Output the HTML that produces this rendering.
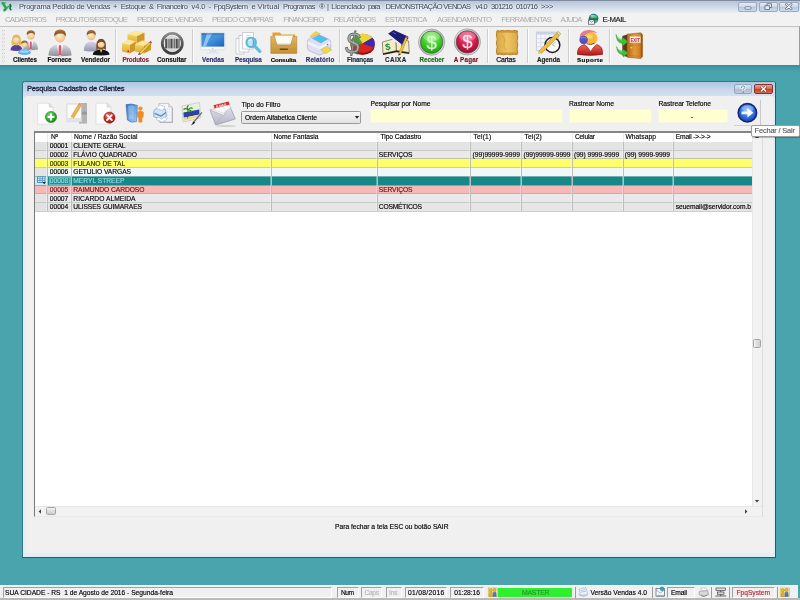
<!DOCTYPE html>
<html lang="pt-BR">
<head>
<meta charset="utf-8">
<title>Programa Pedido de Vendas + Estoque &amp; Financeiro v4.0</title>
<style>
*{box-sizing:border-box;margin:0;padding:0}
html,body{width:800px;height:600px;overflow:hidden}
body{position:relative;background:#4aa4ae;font-family:"Liberation Sans","DejaVu Sans",sans-serif;color:#222}
div,span,svg{position:absolute}
.t{white-space:pre;line-height:1;-webkit-text-stroke:.15px currentColor}
#titlebar{left:0;top:0;width:800px;height:13px;background:linear-gradient(#7d8ca0 0,#7d8ca0 .7px,#b9c6d8 1.4px,#cbd6e4 6px,#dde5ef 10px,#ebeff5 12.5px)}
#menubar{left:0;top:13px;width:800px;height:13px;background:#f2f2f2}
#toolbar{left:0;top:26px;width:800px;height:39px;background:#f0f0f0;border-top:1px solid #c2c2c2;border-right:1px solid #9a9a9a}
#shadow{left:0;top:65px;width:800px;height:7px;background:linear-gradient(#368e9a,#429ba6 45%,#4aa4ae)}
.sep{top:29px;width:2px;height:34px;border-left:1px solid #cdcdcd;border-right:1px solid #fdfdfd}
.wb{top:1.5px;height:10px;border:1px solid #9aaac0;border-radius:2px;background:linear-gradient(#e6edf6,#c9d6e6 50%,#b8c8dc 51%,#cddaea)}
#dlg{left:22px;top:80.5px;width:754px;height:477px;background:#e1eef6;border:1px solid #2f7883;border-bottom-color:#1f5f6a;border-right-color:#1f5f6a;border-radius:3px 3px 0 0}
#dlgtitle{left:0;top:0;width:752px;height:15px;background:linear-gradient(#aec5e3,#c6d6ea 45%,#d6e2f1);border-radius:3px 3px 0 0}
#dlgbody{left:2.5px;top:14.5px;width:747px;height:457px;background:#f0f0f0}
.inp{background:#ffffd2;border:1px solid #f6f6e2;top:109.3px;height:13.7px}
#grid{left:33.5px;top:130.5px;width:729px;height:386.5px;background:#fff;border:1px solid #e9e9e9;border-top:2px solid #858585;border-left:1px solid #7a7a7a;border-right-color:#dcdcdc}
.row{left:34.5px;width:717px;height:8.8px}
.vl{top:132.5px;width:1px;height:78.5px;background:#b4b4b4}
.st{top:587px;height:10.5px;border:1px solid;border-color:#a0a0a0 #fff #fff #a0a0a0;background:#f0f0f0}
.ss{top:586.5px;width:1px;height:11px;background:#9c9c9c}
</style>
</head>
<body>
<div id="titlebar"></div>
<div id="menubar"></div>
<div id="toolbar"></div>
<div id="shadow"></div>
<!-- window buttons -->
<div class="wb" style="left:738px;width:19px"></div>
<div class="wb" style="left:758.5px;width:19px"></div>
<div class="wb" style="left:779px;width:19.5px"></div>
<svg style="left:738px;top:1px" width="62" height="12" viewBox="0 0 62 12">
<rect x="7" y="5.8" width="6" height="2.4" rx=".8" fill="#fff" stroke="#56627a" stroke-width=".8"/>
<rect x="29" y="2.8" width="4.4" height="3.6" fill="#eef2f8" stroke="#56627a" stroke-width=".8"/>
<rect x="27" y="4.8" width="4.4" height="3.6" fill="#eef2f8" stroke="#56627a" stroke-width=".8"/>
<path d="M48.4 3.4 L53.2 7.8 M53.2 3.4 L48.4 7.8" stroke="#56627a" stroke-width="2.4" stroke-linecap="round"/>
<path d="M48.4 3.4 L53.2 7.8 M53.2 3.4 L48.4 7.8" stroke="#fff" stroke-width="1.1" stroke-linecap="round"/>
</svg>
<!-- toolbar separators -->
<div class="sep" style="left:115px"></div>
<div class="sep" style="left:192px"></div>
<div class="sep" style="left:338.5px"></div>
<div class="sep" style="left:486.5px"></div>
<div class="sep" style="left:527px"></div>
<div class="sep" style="left:567.5px"></div>
<div class="sep" style="left:608.5px"></div>
<!-- dialog -->
<div id="dlg"><div id="dlgtitle"></div><div id="dlgbody"></div></div>
<div style="left:733.5px;top:83.5px;width:18.5px;height:10px;border:1px solid #93a6c0;border-radius:2px;background:linear-gradient(#d6e1ef,#c0d0e4 50%,#aabdd6 51%,#bccce0)"></div>
<div style="left:753.5px;top:83.5px;width:19.5px;height:10px;border:1px solid #84362c;border-radius:2px;background:linear-gradient(#e8a698,#d6624e 50%,#c43c26 51%,#d66a50)"></div>
<svg style="left:733px;top:83px" width="42" height="12" viewBox="0 0 42 12">
<path d="M8.3 4.6 Q8.3 2.8 10 2.8 Q11.8 2.8 11.8 4.4 Q11.8 5.6 10.2 6.2 L10.2 7.2" fill="none" stroke="#fff" stroke-width="2.2" stroke-linecap="round"/>
<path d="M8.3 4.6 Q8.3 2.8 10 2.8 Q11.8 2.8 11.8 4.4 Q11.8 5.6 10.2 6.2 L10.2 7.2" fill="none" stroke="#6a7a92" stroke-width=".9" stroke-linecap="round"/>
<circle cx="10.2" cy="9" r=".75" fill="#6a7a92"/>
<path d="M28.4 3.8 L32.6 8 M32.6 3.8 L28.4 8" stroke="#8a4238" stroke-width="2.5" stroke-linecap="round"/>
<path d="M28.4 3.8 L32.6 8 M32.6 3.8 L28.4 8" stroke="#fff" stroke-width="1.3" stroke-linecap="round"/>
</svg>
<!-- filter controls -->
<div style="left:241px;top:111px;width:120px;height:12.5px;border:1px solid #9a9a9a;border-radius:1.5px;background:linear-gradient(#f4f4f4,#e2e2e2)"></div>
<svg style="left:353.6px;top:115px" width="6" height="5" viewBox="0 0 6 5"><path d="M.8 1 L5.2 1 L3 3.8Z" fill="#222"/></svg>
<div class="inp" style="left:370px;width:193px"></div>
<div class="inp" style="left:569px;width:83px"></div>
<div class="inp" style="left:658px;width:70px"></div>
<div style="left:691px;top:116.5px;width:2.2px;height:1.6px;background:#e0302a"></div>
<div style="left:733.5px;top:100px;width:27px;height:26px;border-right:1px solid #c8c8c8;border-bottom:1px solid #d0d0d0"></div>
<div id="grid"></div>
<div class="row" style="top:141.50px;height:9.03px;background:#e4e4e4"></div>
<div style="left:34.5px;top:141.50px;width:13px;height:9.03px;background:#e2e2e2"></div>
<div class="row" style="top:150.23px;height:9.03px;background:#e9e9e9"></div>
<div style="left:34.5px;top:150.23px;width:13px;height:9.03px;background:#e6e6e6"></div>
<div class="row" style="top:158.96px;height:9.03px;background:#ffff6a"></div>
<div style="left:34.5px;top:158.96px;width:13px;height:9.03px;background:#ffff6a"></div>
<div class="row" style="top:167.69px;height:9.03px;background:#f1f7f7"></div>
<div style="left:34.5px;top:167.69px;width:13px;height:9.03px;background:#e4e4e4"></div>
<div class="row" style="top:176.42px;height:9.03px;background:#168888"></div>
<div style="left:34.5px;top:176.42px;width:13px;height:9.03px;background:#c4ecf0"></div>
<div class="row" style="top:185.15px;height:9.03px;background:#f7b8b8"></div>
<div style="left:34.5px;top:185.15px;width:13px;height:9.03px;background:#f7b8b8"></div>
<div class="row" style="top:193.88px;height:9.03px;background:#e9e9e9"></div>
<div style="left:34.5px;top:193.88px;width:13px;height:9.03px;background:#e4e4e4"></div>
<div class="row" style="top:202.61px;height:9.03px;background:#e6e6e6"></div>
<div style="left:34.5px;top:202.61px;width:13px;height:9.03px;background:#e2e2e2"></div>
<div style="left:34.5px;top:149.73px;width:717px;height:1px;background:#c2c2c2;opacity:.8"></div>
<div style="left:34.5px;top:158.46px;width:717px;height:1px;background:#b9b98a;opacity:.8"></div>
<div style="left:34.5px;top:167.19px;width:717px;height:1px;background:#c9c97a;opacity:.8"></div>
<div style="left:34.5px;top:175.92px;width:717px;height:1px;background:#8ab8b8;opacity:.8"></div>
<div style="left:34.5px;top:184.65px;width:717px;height:1px;background:#a08a8a;opacity:.8"></div>
<div style="left:34.5px;top:193.38px;width:717px;height:1px;background:#c9a0a0;opacity:.8"></div>
<div style="left:34.5px;top:202.11px;width:717px;height:1px;background:#c2c2c2;opacity:.8"></div>
<div style="left:34.5px;top:210.84px;width:717px;height:1px;background:#c8c8c8;opacity:.8"></div>
<div class="vl" style="left:46.3px;top:141.5px;height:69.8px;background:rgba(255,255,255,.3)"></div>
<div class="vl" style="left:47.3px;top:141.5px;height:69.8px;background:#bdbdbd"></div>
<div class="vl" style="left:47.3px;top:133px;height:8.5px;background:#ececec"></div>
<div class="vl" style="left:69.6px;top:141.5px;height:69.8px;background:rgba(255,255,255,.3)"></div>
<div class="vl" style="left:70.6px;top:141.5px;height:69.8px;background:#bdbdbd"></div>
<div class="vl" style="left:70.6px;top:133px;height:8.5px;background:#ececec"></div>
<div class="vl" style="left:269.8px;top:141.5px;height:69.8px;background:rgba(255,255,255,.3)"></div>
<div class="vl" style="left:270.8px;top:141.5px;height:69.8px;background:#bdbdbd"></div>
<div class="vl" style="left:270.8px;top:133px;height:8.5px;background:#ececec"></div>
<div class="vl" style="left:376.1px;top:141.5px;height:69.8px;background:rgba(255,255,255,.3)"></div>
<div class="vl" style="left:377.1px;top:141.5px;height:69.8px;background:#bdbdbd"></div>
<div class="vl" style="left:377.1px;top:133px;height:8.5px;background:#ececec"></div>
<div class="vl" style="left:469.2px;top:141.5px;height:69.8px;background:rgba(255,255,255,.3)"></div>
<div class="vl" style="left:470.2px;top:141.5px;height:69.8px;background:#bdbdbd"></div>
<div class="vl" style="left:470.2px;top:133px;height:8.5px;background:#ececec"></div>
<div class="vl" style="left:520.4px;top:141.5px;height:69.8px;background:rgba(255,255,255,.3)"></div>
<div class="vl" style="left:521.4px;top:141.5px;height:69.8px;background:#bdbdbd"></div>
<div class="vl" style="left:521.4px;top:133px;height:8.5px;background:#ececec"></div>
<div class="vl" style="left:571.2px;top:141.5px;height:69.8px;background:rgba(255,255,255,.3)"></div>
<div class="vl" style="left:572.2px;top:141.5px;height:69.8px;background:#bdbdbd"></div>
<div class="vl" style="left:572.2px;top:133px;height:8.5px;background:#ececec"></div>
<div class="vl" style="left:621.8px;top:141.5px;height:69.8px;background:rgba(255,255,255,.3)"></div>
<div class="vl" style="left:622.8px;top:141.5px;height:69.8px;background:#bdbdbd"></div>
<div class="vl" style="left:622.8px;top:133px;height:8.5px;background:#ececec"></div>
<div class="vl" style="left:672.4px;top:141.5px;height:69.8px;background:rgba(255,255,255,.3)"></div>
<div class="vl" style="left:673.4px;top:141.5px;height:69.8px;background:#bdbdbd"></div>
<div class="vl" style="left:673.4px;top:133px;height:8.5px;background:#ececec"></div>
<div style="left:48.5px;top:176.72px;width:21.6px;height:7.93px;background:#1f9292;border:1px solid #58b8b8"></div>
<svg style="left:35.5px;top:176.42px" width="12" height="9" viewBox="0 0 12 9"><rect x="1.4" y=".8" width="7.6" height="5.6" fill="#fff" stroke="#2f7fb4" stroke-width=".8"/><path d="M1.4 2.8H9M4 .8V6.4M6.4 .8V6.4M1.4 4.6H9" stroke="#2f7fb4" stroke-width=".7"/><path d="M6.6 6 L9.8 6 L8.2 8.2Z" fill="#111"/></svg>
<div style="left:751.5px;top:132.5px;width:10px;height:373px;background:#f2f2f2;border-left:1px solid #e6e6e6"></div>
<div style="left:752.5px;top:338.5px;width:8.5px;height:9px;background:linear-gradient(90deg,#f4f4f4,#dcdcdc 50%,#cfcfcf);border:1px solid #a4a4a4;border-radius:1.5px"></div>
<svg style="left:752px;top:133px" width="10" height="8" viewBox="0 0 10 8"><path d="M2.8 5 L5 2.4 L7.2 5Z" fill="#444"/></svg>
<svg style="left:752px;top:497px" width="10" height="8" viewBox="0 0 10 8"><path d="M2.8 3 L5 5.6 L7.2 3Z" fill="#444"/></svg>
<div style="left:34.5px;top:505.5px;width:727px;height:10px;background:#f2f2f2;border-top:1px solid #e6e6e6"></div>
<div style="left:46px;top:506.5px;width:9.5px;height:8.5px;background:linear-gradient(#f4f4f4,#dcdcdc 50%,#cfcfcf);border:1px solid #a4a4a4;border-radius:1.5px"></div>
<svg style="left:36px;top:506.5px" width="8" height="9" viewBox="0 0 8 9"><path d="M5 2.3 L2.6 4.5 L5 6.7Z" fill="#444"/></svg>
<svg style="left:742px;top:506.5px" width="8" height="9" viewBox="0 0 8 9"><path d="M3 2.3 L5.4 4.5 L3 6.7Z" fill="#444"/></svg>
<!-- status bar -->
<div style="left:0;top:584.5px;width:798px;height:15.5px;background:#f0f0f0;border-top:1px solid #fafafa"></div>
<div style="left:0;top:598.3px;width:800px;height:2px;background:#b9b9b9"></div>
<div class="st" style="left:3px;width:329px"></div>
<div class="st" style="left:337px;width:21.5px"></div>
<div class="st" style="left:361px;width:20.5px"></div>
<div class="st" style="left:386px;width:15.5px"></div>
<div class="st" style="left:404.5px;width:42px"></div>
<div class="st" style="left:450px;width:34px"></div>
<div style="left:497.5px;top:587.5px;width:74px;height:9px;background:#2ff02f"></div>
<div class="ss" style="left:574.5px"></div>
<div class="ss" style="left:652px"></div>
<div class="st" style="left:667px;width:27.5px"></div>
<div class="ss" style="left:711px"></div>
<div class="ss" style="left:729px"></div>
<div class="st" style="left:732px;width:42.5px;background:#f6ecec"></div>
<div class="ss" style="left:777px"></div>
<div style="left:0;top:0;width:800px;height:600px;will-change:transform">
<svg style="left:0;top:26px" width="800" height="40" viewBox="0 26 800 40">
<defs>
<radialGradient id="skin" cx=".45" cy=".4" r=".7"><stop offset="0" stop-color="#fdebd0"/><stop offset=".7" stop-color="#f3c793"/><stop offset="1" stop-color="#d89a5e"/></radialGradient>
<linearGradient id="suit" x1="0" y1="0" x2="0" y2="1"><stop offset="0" stop-color="#d9d9e0"/><stop offset="1" stop-color="#8f8f9a"/></linearGradient>
<linearGradient id="suit2" x1="0" y1="0" x2="0" y2="1"><stop offset="0" stop-color="#d4d4e6"/><stop offset="1" stop-color="#9494b4"/></linearGradient>
<linearGradient id="ringd" x1="0" y1="0" x2="0" y2="1"><stop offset="0" stop-color="#8c8c8c"/><stop offset=".5" stop-color="#555"/><stop offset="1" stop-color="#3c3c3c"/></linearGradient>
<linearGradient id="hairb" x1="0" y1="0" x2="0" y2="1"><stop offset="0" stop-color="#a8743a"/><stop offset="1" stop-color="#6e4218"/></linearGradient>
<linearGradient id="boxf" x1="0" y1="0" x2="0" y2="1"><stop offset="0" stop-color="#f6d468"/><stop offset="1" stop-color="#dca832"/></linearGradient>
<linearGradient id="scr" x1="0" y1="0" x2="1" y2="1"><stop offset="0" stop-color="#3a88d8"/><stop offset=".45" stop-color="#4496e0"/><stop offset="1" stop-color="#1f60b4"/></linearGradient>
<radialGradient id="grn" cx=".5" cy=".3" r=".75"><stop offset="0" stop-color="#9af478"/><stop offset=".55" stop-color="#3ccc24"/><stop offset="1" stop-color="#1c9410"/></radialGradient>
<radialGradient id="crim" cx=".5" cy=".3" r=".75"><stop offset="0" stop-color="#f76a90"/><stop offset=".55" stop-color="#d4184a"/><stop offset="1" stop-color="#8e0c2c"/></radialGradient>
<linearGradient id="ring" x1="0" y1="0" x2="1" y2="1"><stop offset="0" stop-color="#fafafa"/><stop offset=".5" stop-color="#b4b4b4"/><stop offset="1" stop-color="#ececec"/></linearGradient>
<linearGradient id="tan" x1="0" y1="0" x2="0" y2="1"><stop offset="0" stop-color="#e2b65c"/><stop offset="1" stop-color="#c4923a"/></linearGradient>
<linearGradient id="parch" x1="0" y1="0" x2="1" y2="0"><stop offset="0" stop-color="#d9a53e"/><stop offset=".5" stop-color="#efc465"/><stop offset="1" stop-color="#dcaa44"/></linearGradient>
<linearGradient id="door" x1="0" y1="0" x2="1" y2="0"><stop offset="0" stop-color="#b8691a"/><stop offset=".5" stop-color="#e39a35"/><stop offset="1" stop-color="#c67a22"/></linearGradient>
<linearGradient id="redb" x1="0" y1="0" x2="0" y2="1"><stop offset="0" stop-color="#f06a5a"/><stop offset="1" stop-color="#b41414"/></linearGradient>
</defs>
<rect x="2" y="30.0" width="1" height="1" fill="#c9c9c9"/><rect x="4" y="30.0" width="1" height="1" fill="#c9c9c9"/><rect x="3" y="31.6" width="1" height="1" fill="#e0e0e0"/>
<rect x="2" y="33.8" width="1" height="1" fill="#c9c9c9"/><rect x="4" y="33.8" width="1" height="1" fill="#c9c9c9"/><rect x="3" y="35.4" width="1" height="1" fill="#e0e0e0"/>
<rect x="2" y="37.6" width="1" height="1" fill="#c9c9c9"/><rect x="4" y="37.6" width="1" height="1" fill="#c9c9c9"/><rect x="3" y="39.2" width="1" height="1" fill="#e0e0e0"/>
<rect x="2" y="41.4" width="1" height="1" fill="#c9c9c9"/><rect x="4" y="41.4" width="1" height="1" fill="#c9c9c9"/><rect x="3" y="43.0" width="1" height="1" fill="#e0e0e0"/>
<rect x="2" y="45.2" width="1" height="1" fill="#c9c9c9"/><rect x="4" y="45.2" width="1" height="1" fill="#c9c9c9"/><rect x="3" y="46.8" width="1" height="1" fill="#e0e0e0"/>
<rect x="2" y="49.0" width="1" height="1" fill="#c9c9c9"/><rect x="4" y="49.0" width="1" height="1" fill="#c9c9c9"/><rect x="3" y="50.6" width="1" height="1" fill="#e0e0e0"/>
<rect x="2" y="52.8" width="1" height="1" fill="#c9c9c9"/><rect x="4" y="52.8" width="1" height="1" fill="#c9c9c9"/><rect x="3" y="54.4" width="1" height="1" fill="#e0e0e0"/>
<rect x="2" y="56.6" width="1" height="1" fill="#c9c9c9"/><rect x="4" y="56.6" width="1" height="1" fill="#c9c9c9"/><rect x="3" y="58.2" width="1" height="1" fill="#e0e0e0"/>
<rect x="2" y="60.4" width="1" height="1" fill="#c9c9c9"/><rect x="4" y="60.4" width="1" height="1" fill="#c9c9c9"/><rect x="3" y="62.0" width="1" height="1" fill="#e0e0e0"/>
<path d="M23.60 49.60 Q23.60 42.50 28.80 41.00 L32.80 41.00 Q38.00 42.50 38.00 49.60 Q30.80 51.10 23.60 49.60Z" fill="url(#suit)"/><path d="M28.60 41.00 L33.00 41.00 L31.60 49.60 L30.00 49.60Z" fill="#fff"/><path d="M29.92 41.60 L31.68 41.60 L31.92 49.30 L29.68 49.30Z" fill="#d4586a"/><ellipse cx="30.80" cy="35.40" rx="3.68" ry="4.00" fill="url(#skin)"/><path d="M26.88 35.30 Q26.00 30.20 31.20 30.20 Q35.80 30.60 34.72 35.30 Q33.60 32.40 30.80 33.00 Q27.60 33.20 26.88 35.30Z" fill="url(#hairb)"/>
<path d="M10.50 50.20 Q10.50 46.50 14.50 45.00 L18.30 45.00 Q22.30 46.50 22.30 50.20 Q16.40 51.70 10.50 50.20Z" fill="#5a3f98"/><path d="M11.65 45.68 Q10.70 34.66 16.40 34.47 Q22.10 34.66 21.15 45.68 L18.68 44.16 Q16.40 46.82 14.12 44.16Z" fill="#e3bd52"/><ellipse cx="16.40" cy="39.60" rx="3.50" ry="3.80" fill="url(#skin)"/><path d="M12.60 39.80 Q12.22 34.85 16.40 34.85 Q20.58 34.85 20.20 39.80 Q18.30 36.94 16.02 37.51 Q13.74 37.70 12.60 39.80Z" fill="#e3bd52"/>
<path d="M19.20 52.00 Q19.20 50.10 22.80 48.60 L26.00 48.60 Q29.60 50.10 29.60 52.00 Q24.40 53.50 19.20 52.00Z" fill="#7cc0ee"/><ellipse cx="24.40" cy="44.60" rx="2.94" ry="3.20" fill="url(#skin)"/><path d="M21.26 44.50 Q20.56 40.44 24.72 40.44 Q28.40 40.76 27.54 44.50 Q26.64 42.20 24.40 42.68 Q21.84 42.84 21.26 44.50Z" fill="#9a6a2e"/>
<ellipse cx="24.5" cy="52.4" rx="6.5" ry="2.5" fill="#62b0ea"/><ellipse cx="24.5" cy="51.6" rx="4.6" ry="1.2" fill="#a4d6f6"/>
<path d="M48.40 55.40 Q48.40 46.10 57.20 44.60 L62.80 44.60 Q71.60 46.10 71.60 55.40 Q60.00 56.90 48.40 55.40Z" fill="url(#suit)"/><path d="M56.92 44.60 L63.08 44.60 L61.12 55.40 L58.88 55.40Z" fill="#fff"/><path d="M58.77 45.20 L61.23 45.20 L61.57 55.10 L58.43 55.10Z" fill="#d4586a"/><ellipse cx="60.00" cy="36.90" rx="5.15" ry="5.60" fill="url(#skin)"/><path d="M54.51 36.80 Q53.28 29.62 60.56 29.62 Q67.00 30.18 65.49 36.80 Q63.92 32.70 60.00 33.54 Q55.52 33.82 54.51 36.80Z" fill="url(#hairb)"/>
<path d="M83.80 50.80 Q83.80 43.30 89.00 41.80 L93.40 41.80 Q98.60 43.30 98.60 50.80 Q91.20 52.30 83.80 50.80Z" fill="url(#suit2)"/><ellipse cx="91.20" cy="35.80" rx="4.05" ry="4.40" fill="url(#skin)"/><path d="M86.89 35.70 Q85.92 30.08 91.64 30.08 Q96.70 30.52 95.51 35.70 Q94.28 32.50 91.20 33.16 Q87.68 33.38 86.89 35.70Z" fill="url(#hairb)"/>
<path d="M92.70 54.80 Q92.70 51.10 99.20 49.60 L103.00 49.60 Q109.50 51.10 109.50 54.80 Q101.10 56.30 92.70 54.80Z" fill="#141414"/><path d="M96.35 50.08 Q95.40 39.06 101.10 38.87 Q106.80 39.06 105.85 50.08 L103.38 48.56 Q101.10 51.22 98.82 48.56Z" fill="#7a4a20"/><ellipse cx="101.10" cy="44.00" rx="3.50" ry="3.80" fill="url(#skin)"/><path d="M97.30 44.20 Q96.92 39.25 101.10 39.25 Q105.28 39.25 104.90 44.20 Q103.00 41.34 100.72 41.91 Q98.44 42.10 97.30 44.20Z" fill="#7a4a20"/>
<path d="M99.8 49.6 L102.4 49.6 L101.1 53Z" fill="#f3c793"/>
<path d="M127.5 34.1 L135.2 30.5 L144.5 32.5 L136.8 36.3Z" fill="#fbe79a"/><path d="M127.5 34.1 L136.8 36.3 L136.8 44.0 L127.5 41.8Z" fill="url(#boxf)"/><path d="M136.8 36.3 L144.5 32.5 L144.5 40.4 L136.8 44.0Z" fill="#cf9826"/>
<path d="M122.0 42.9 L128.3 39.5 L136.0 41.4 L129.7 44.9Z" fill="#fbe79a"/><path d="M122.0 42.9 L129.7 44.9 L129.7 53.5 L122.0 51.5Z" fill="url(#boxf)"/><path d="M129.7 44.9 L136.0 41.4 L136.0 50.1 L129.7 53.5Z" fill="#cf9826"/>
<path d="M135.0 43.9 L142.2 40.5 L151.0 42.4 L143.8 45.9Z" fill="#fbe79a"/><path d="M135.0 43.9 L143.8 45.9 L143.8 53.5 L135.0 51.5Z" fill="url(#boxf)"/><path d="M143.8 45.9 L151.0 42.4 L151.0 50.1 L143.8 53.5Z" fill="#cf9826"/>
<path d="M139 53 L149.5 42 L151 43.6 L141 54.2Z" fill="#f0d050" stroke="#8a6a10" stroke-width=".5"/><path d="M149.5 42 L150.6 40.8 L152 42.4 L151 43.6Z" fill="#c03030"/><path d="M139 53 L138 55 L141 54.2Z" fill="#4a3a10"/>
<rect x="127.5" y="50.5" width="1.6" height="1.6" fill="#a03030"/>
<circle cx="172.3" cy="43.4" r="11.7" fill="#f8f8f8"/><circle cx="172.3" cy="43.4" r="9.9" fill="#dadada" stroke="url(#ringd)" stroke-width="3"/><circle cx="172.3" cy="43.4" r="8.2" fill="none" stroke="#f6f6f6" stroke-width=".8"/><rect x="164.8" y="38.8" width="15" height="9.6" fill="#ececec"/>
<rect x="165.2" y="38.8" width="2.2" height="9.6" fill="#4c4c4c"/>
<rect x="168.4" y="38.8" width="1.2" height="9.6" fill="#4c4c4c"/>
<rect x="170.4" y="38.8" width="2.2" height="9.6" fill="#4c4c4c"/>
<rect x="173.6" y="38.8" width="1.2" height="9.6" fill="#4c4c4c"/>
<rect x="175.6" y="38.8" width="2.2" height="9.6" fill="#4c4c4c"/>
<rect x="178.4" y="38.8" width="1.2" height="9.6" fill="#4c4c4c"/>
<rect x="200.6" y="32.4" width="24.4" height="17.4" rx=".8" fill="#f4f6f8" stroke="#cfd4da" stroke-width=".6"/><rect x="201.4" y="33.2" width="22.8" height="13.4" fill="url(#scr)"/><path d="M203 46.6 L207 33.2 L212.6 33.2 Q208 40 206 46.6Z" fill="#c4e4fa" opacity=".6"/><rect x="201.4" y="33.2" width="22.8" height="1.6" fill="#1c4c90" opacity=".35"/><circle cx="212.8" cy="48.4" r=".5" fill="#9aa0a8"/><path d="M210 49.8 L216 49.8 L217 52.4 L209 52.4Z" fill="#dcdfe3"/><rect x="206.5" y="52.2" width="13" height="1.5" rx=".7" fill="#e4e6ea"/>
<path d="M236 38.5 L244 38.5 L244 54 L236 54Z" fill="#fbfbfb" stroke="#b9bec6" stroke-width=".7"/><path d="M239 35.5 L249 35.5 L249 52 L239 52Z" fill="#fbfbfb" stroke="#b9bec6" stroke-width=".7"/><path d="M242.5 32.5 L253.5 32.5 L253.5 49 L242.5 49Z" fill="#fdfdfd" stroke="#b9bec6" stroke-width=".7"/><path d="M246 35.5H251M246 37.5H250" stroke="#c8ccd2" stroke-width=".6"/>
<path d="M254.8 46.2 L259.8 51.4" stroke="#62bfe0" stroke-width="3.2" stroke-linecap="round"/><circle cx="251.2" cy="42.4" r="4.7" fill="#bfe6f6" stroke="#56b8da" stroke-width="2"/><path d="M248.8 40.6 Q250.8 39 253.2 40.2" stroke="#fff" stroke-width="1" fill="none"/><path d="M251.8 38.8 A3.7 3.7 0 0 1 251.8 46 Q254 42.4 251.8 38.8Z" fill="#3a84c8" opacity=".7"/>
<path d="M272.5 36 L272.5 32.6 L280 32.6 L281.5 34.4 L295 34.4 L295 38Z" fill="#e9a032"/><rect x="275" y="35.6" width="18" height="8" fill="#fbfbf6"/><path d="M270.8 36.4 L274.6 36.4 L277 45 L290.6 45 L293 36.4 L296.8 36.4 L296.8 53.4 L270.8 53.4Z" fill="url(#tan)" stroke="#a87a2a" stroke-width=".5"/><rect x="279.6" y="48.6" width="8.4" height="1.5" rx=".6" fill="#5a4216"/><path d="M271 44H296.6M271 49H296.6" stroke="#b98a34" stroke-width=".4" opacity=".7"/>
<path d="M310 36.2 L315.6 31.6 L320.4 33.8 L314.4 38.6Z" fill="#f3d648" stroke="#cfae20" stroke-width=".4"/>
<path d="M307.4 41.4 Q307.4 39.6 309.4 38.6 L316.4 35.2 Q318.2 34.4 320 35.2 L329.2 39.4 Q330.8 40.2 330.8 42 L330.8 47.6 Q330.8 49.2 329.2 50 L321.6 54.4 Q319.8 55.4 318 54.6 L309 50.6 Q307.4 49.8 307.4 48Z" fill="#dedef2" stroke="#a4a4cc" stroke-width=".6"/>
<path d="M307.8 41.2 L319.6 46.4 L330.4 41.4 L330.6 44 L319.6 49.4 L307.6 44Z" fill="#f4f4fc" opacity=".9"/>
<path d="M312.4 38.6 L319 35 L327.6 39 L321 43Z" fill="#4fc0ea" stroke="#38a0d0" stroke-width=".3"/>
<path d="M320.6 49.6 L326.8 46.4 L332 50 L325.2 53.8Z" fill="#f3d648" stroke="#cfae20" stroke-width=".4"/><circle cx="327.6" cy="44.6" r=".8" fill="#6a6ab0"/>
<ellipse cx="362.6" cy="45.8" rx="12" ry="9.2" fill="#8a1414"/><ellipse cx="362.6" cy="43.4" rx="12" ry="9.6" fill="#d8241c"/><path d="M362.6 43.4 L351.6 47.6 A12 9.6 0 0 1 357 34.9Z" fill="#3aa83a"/><path d="M362.6 43.4 L357 34.9 A12 9.6 0 0 1 372.4 37.8Z" fill="#ecd83a"/><path d="M362.6 43.4 L372.4 37.8 A12 9.6 0 0 1 373.6 47.4Z" fill="#3a2cb0"/><path d="M351.6 47.6 L351.6 50 Q354 54 358 54.6 L358 52Z" fill="#2a7a2a"/>
<text x="345.6" y="53.2" font-family="Liberation Sans,sans-serif" font-style="italic" font-size="29" fill="#adadad" stroke="#666" stroke-width=".8" textLength="14.5" lengthAdjust="spacingAndGlyphs">$</text>
<path d="M382.4 42 L396 38.4 L396.4 50.6 L383 53.6Z" fill="#f4edc8" stroke="#5a4a28" stroke-width=".6"/><path d="M396 38.4 L408.6 41 L409.2 52.6 L396.4 50.6Z" fill="#f0e8c0" stroke="#5a4a28" stroke-width=".6"/><path d="M383 53.6 L396.4 50.6 L409.2 52.6 L409.2 54 L396.4 52.2 L383 55Z" fill="#2a2418"/>
<text x="385.2" y="50" font-family="Liberation Sans,sans-serif" font-weight="bold" font-size="9.5" fill="#2a8f3a" transform="rotate(-10 388 47)">$</text>
<path d="M388 33.8 L393.6 30 L408.2 36.4 L401.6 44.4Z" fill="#1e1e78"/><path d="M388 33.8 L401.6 44.4 L401.4 46.6 L387.8 36Z" fill="#ececf4"/><path d="M401.6 44.4 L408.2 36.4 L408.2 38.4 L401.4 46.6Z" fill="#0e0e4a"/><path d="M392.6 32.4 L396 33.8" stroke="#7a7ad0" stroke-width=".7"/>
<path d="M398.6 53.6 L405.4 37.4 L407.4 38.2 L400.6 54.4Z" fill="#f0c83a" stroke="#8a6a10" stroke-width=".4"/><path d="M405.4 37.4 L406 36 L408 36.8 L407.4 38.2Z" fill="#c86060"/><path d="M398.6 53.6 L398.4 55.8 L400.6 54.4Z" fill="#3a2a10"/>
<circle cx="431.6" cy="42.2" r="13.1" fill="url(#ring)" stroke="#777" stroke-width=".5"/><circle cx="431.6" cy="42.2" r="11.2" fill="url(#grn)" stroke="#4a4a4a" stroke-width=".6"/><ellipse cx="431.6" cy="36.6" rx="8.4" ry="4.8" fill="#fff" opacity=".25"/><text x="431.6" y="48.6" text-anchor="middle" font-family="Liberation Sans,sans-serif" font-size="18.5" fill="#dcffd0" stroke="#dcffd0" stroke-width=".15">$</text>
<circle cx="467.4" cy="41.9" r="13.1" fill="url(#ring)" stroke="#777" stroke-width=".5"/><circle cx="467.4" cy="41.9" r="11.2" fill="url(#crim)" stroke="#4a4a4a" stroke-width=".6"/><ellipse cx="467.4" cy="36.3" rx="8.4" ry="4.8" fill="#fff" opacity=".25"/><text x="467.4" y="48.3" text-anchor="middle" font-family="Liberation Sans,sans-serif" font-size="18.5" fill="#ffe4ec" stroke="#ffe4ec" stroke-width=".15">$</text>
<path d="M497 30.6 L499.4 31.2 L502 30.4 L505 31 L508.4 30.4 L512 31 L515 30.4 L517.6 31 L517 34 L517.8 37 L517 41 L517.8 45 L517 49 L517.8 52 L517.2 54.6 L514 54 L510.6 54.8 L507 54 L503.4 54.8 L500 54 L497 54.6 L496.4 51 L497.2 47 L496.4 43 L497.2 39 L496.4 35Z" fill="url(#parch)" stroke="#b5832a" stroke-width="1"/><path d="M501 35 Q506 38 504 44 Q503 48 507 50" stroke="#d4a040" stroke-width="1.2" fill="none" opacity=".7"/><path d="M497 30.6 L517.6 31 L517 33 L497 32.6Z" fill="#c08c2c" opacity=".7"/><path d="M497 52.6 L517.4 52.6 L517.2 54.6 L497 54.6Z" fill="#c08c2c" opacity=".7"/>
<rect x="536.4" y="32" width="22" height="18.6" fill="#f4f6fa" stroke="#b4bccc" stroke-width=".6"/><rect x="536.4" y="32" width="22" height="2.6" fill="#c9d3e6"/><path d="M540.8 34.6V50.6M545.2 34.6V50.6M549.6 34.6V50.6M554 34.6V50.6M536.4 38.6H558.4M536.4 42.6H558.4M536.4 46.6H558.4" stroke="#c4cce0" stroke-width=".5"/>
<circle cx="552.4" cy="45" r="7.4" fill="#f8f8f8" stroke="#1c1c1c" stroke-width="1.5"/><path d="M552.4 45 L556 41.4 M552.4 45 L555 46.4" stroke="#8a8a8a" stroke-width=".6"/><path d="M538.6 51.4 L556.6 33 L559.4 35.4 L541.4 53.4Z" fill="#f0be3c" stroke="#a87a16" stroke-width=".5"/><path d="M556.6 33 L558.2 31.4 L561 33.8 L559.4 35.4Z" fill="#e8d8a0" stroke="#a87a16" stroke-width=".4"/><path d="M538.6 51.4 L537.4 54.4 L541.4 53.4Z" fill="#e8d0a0"/>
<path d="M577.4 54.4 Q577 46 584.6 44.6 L590.6 50 L596.8 44.6 Q603 46 602.6 54.4 Q590 56.4 577.4 54.4Z" fill="url(#redb)" stroke="#7a1010" stroke-width=".6"/><path d="M586.6 44.6 L590.6 51 L594.8 44.6Z" fill="#fff"/>
<path d="M580.4 40 Q578 33 585 30.6 Q592 28.6 597.6 33 Q592 31.6 587 34 Q582.6 36 583.6 42Z" fill="#e87a8a"/><circle cx="591.2" cy="38.4" r="6.2" fill="#f7b93a"/><ellipse cx="589.6" cy="36.4" rx="3" ry="2.2" fill="#fbd86a"/><circle cx="583.6" cy="40" r="4.2" fill="#4a58c8"/><path d="M581 38.4 Q583.6 36.4 586.4 38.4" stroke="#9a6ad0" stroke-width="1.2" fill="none"/><path d="M580.6 41.6 Q583.6 43.6 586.8 42" stroke="#7a3aa8" stroke-width="1" fill="none"/><path d="M586.6 43.6 Q590.6 45.8 594.6 43.2" stroke="#7a3a1a" stroke-width=".9" fill="none"/>
<path d="M622.4 36 L627.4 34.6 L627.4 57 L622.4 55.4Z" fill="#5e3812"/>
<path d="M627 34.2 L640.8 32.8 L642.4 34.8 L642.4 56.4 L640.8 58.6 L627 57.2Z" fill="url(#door)" stroke="#8a4a10" stroke-width=".5"/><path d="M640.8 32.8 L642.4 34.8 L642.4 56.4 L640.8 58.6Z" fill="#9a5a14"/><rect x="629.8" y="36.4" width="10.8" height="6.4" fill="#fbf6f0" stroke="#c8a070" stroke-width=".3"/><text x="635.2" y="41.8" text-anchor="middle" font-family="Liberation Sans,sans-serif" font-weight="bold" font-size="5.6" fill="#c8202c" textLength="9.6" lengthAdjust="spacingAndGlyphs">EXIT</text><circle cx="631.4" cy="47.6" r="1.2" fill="#f3c860" stroke="#9a6a1a" stroke-width=".3"/><path d="M629.6 45.4 L640 45 L640 56.4 L629.6 55.6Z" fill="none" stroke="#b06a1a" stroke-width=".4"/>
<path d="M0 0 Q1.6 4.8 6.4 5 L6.2 2.6 L12 7 L6.8 11.6 L6.6 9 Q0.4 8.8 0 0Z" transform="translate(616,34.4)" fill="#3cc03c" stroke="#1e8a1e" stroke-width=".4"/>
<path d="M0 0 Q1.6 4.8 6.4 5 L6.2 2.6 L12 7 L6.8 11.6 L6.6 9 Q0.4 8.8 0 0Z" transform="translate(616.6,46.6) scale(.98,.9)" fill="#3cc03c" stroke="#1e8a1e" stroke-width=".4"/>
<path d="M617 36.4 Q618.6 39.6 622 40.2" stroke="#a8f0a0" stroke-width=".7" fill="none"/><path d="M617.6 48.4 Q619.2 51.2 622.4 51.8" stroke="#a8f0a0" stroke-width=".7" fill="none"/>
</svg><svg style="left:0;top:0" width="800" height="26" viewBox="0 0 800 26">
<g stroke-linecap="round" fill="none"><path d="M2.6 3 L6.2 8.2 M6.2 8.2 L4.4 10.2 M6.2 8.2 L9.4 6.2 M3.6 4.4 L5 2.8" stroke="#9ae4b0" stroke-width="3.4" opacity=".6"/><path d="M2.6 3 L6.2 8.2" stroke="#2fa552" stroke-width="2.4"/><path d="M6.2 8.2 L4.4 10.2" stroke="#2a9248" stroke-width="2.2"/><path d="M6.2 8.2 L9.2 6.2 M3.8 4.2 L5 2.8" stroke="#35ae58" stroke-width="1.6"/><path d="M10.2 4.6 Q11.4 6 10.2 7.4 Q9.6 8.6 10.8 9.6" stroke="#1e6e3c" stroke-width="1.7"/></g>
<circle cx="593.6" cy="18.6" r="4.8" fill="#1f6f78"/><path d="M590.4 16.2 Q593 13.6 596.6 15.6 Q597.8 17.6 596 18.4 Q593.6 17 592.4 18.6 Q590.6 18.6 590.4 16.2Z" fill="#58c46a"/><path d="M595.4 20.2 Q597.4 19.8 597.8 21 Q597 22.8 595.4 23 Q594.6 21.4 595.4 20.2Z" fill="#4ab45e"/><ellipse cx="592.4" cy="15.8" rx="2" ry="1" fill="#bfeee0" opacity=".6"/><rect x="588.6" y="19.8" width="6" height="4.4" fill="#f4f6f8" stroke="#2a3a3a" stroke-width=".6"/><path d="M588.8 20 L591.6 22.2 L594.4 20" fill="none" stroke="#2a3a3a" stroke-width=".5"/>
</svg>
<svg style="left:30px;top:98px" width="240" height="32" viewBox="30 98 240 32">
<defs>
<radialGradient id="gp" cx=".4" cy=".35" r=".75"><stop offset="0" stop-color="#7fe07a"/><stop offset=".6" stop-color="#2aa82a"/><stop offset="1" stop-color="#157015"/></radialGradient>
<radialGradient id="rx" cx=".4" cy=".35" r=".75"><stop offset="0" stop-color="#f07a6a"/><stop offset=".6" stop-color="#c02424"/><stop offset="1" stop-color="#7a1010"/></radialGradient>
<linearGradient id="bl" x1="0" y1="0" x2="1" y2="1"><stop offset="0" stop-color="#2f78cf"/><stop offset="1" stop-color="#a4cdf3"/></linearGradient>
<linearGradient id="env" x1="0" y1="0" x2="0" y2="1"><stop offset="0" stop-color="#e4e4ee"/><stop offset="1" stop-color="#b4b4c6"/></linearGradient>
</defs>
<path d="M37.6 103.2 L49.0 103.2 L53.0 107.2 L53.0 124.2 L37.6 124.2Z" fill="#fdfdfd" stroke="#d4d4d8" stroke-width=".6"/><path d="M49.0 103.2 L49.0 107.2 L53.0 107.2Z" fill="#e2e2e6" stroke="#c8c8cc" stroke-width=".4"/>
<circle cx="51" cy="117" r="5.6" fill="url(#gp)" stroke="#1a6a1a" stroke-width=".5"/><path d="M47.6 117H54.4M51 113.6V120.4" stroke="#fff" stroke-width="2"/>
<rect x="79" y="103" width="8" height="20.6" fill="#b4b4b4"/><rect x="80" y="111.6" width="7" height="3" fill="#9a9a9a"/><path d="M67 104 L81.4 104 L81.4 121.6 L67 121.6Z" fill="#fbfbfb" stroke="#c4c4c8" stroke-width=".6"/><path d="M67 118 L81.4 118 L81.4 121.6 L67 121.6Z" fill="#dfe4ea"/><path d="M71 116.6 L78.4 104.4 L81 106 L73.6 118.2Z" fill="#f2b24a" stroke="#b87a1a" stroke-width=".4"/><path d="M71 116.6 L70.6 119.6 L73.6 118.2Z" fill="#f2e0b0"/><path d="M78.4 104.4 L79.2 103.2 L81.8 104.8 L81 106Z" fill="#e08a8a"/>
<path d="M96.0 103.2 L107.0 103.2 L111.0 107.2 L111.0 124.2 L96.0 124.2Z" fill="#fdfdfd" stroke="#d4d4d8" stroke-width=".6"/><path d="M107.0 103.2 L107.0 107.2 L111.0 107.2Z" fill="#e2e2e6" stroke="#c8c8cc" stroke-width=".4"/>
<circle cx="109.4" cy="117.6" r="5.6" fill="url(#rx)" stroke="#6a1010" stroke-width=".5"/><path d="M107 115.2L111.8 120M111.8 115.2L107 120" stroke="#fff" stroke-width="1.8" stroke-linecap="round"/>
<path d="M126 104.6 Q131 103 137.4 105.4 L136.6 121.6 Q131 123.6 127.4 120Z" fill="url(#bl)" stroke="#2a5a9a" stroke-width=".5"/><path d="M128 106 Q131 105 134 106.4 L133.4 119 Q131 120 129 118.4Z" fill="#fff" opacity=".25"/>
<circle cx="140.4" cy="108.6" r="2.2" fill="#f0922a"/><path d="M137 112 Q140.4 110 143.8 112 L143.4 117.4 L142.4 117.4 L142.2 122.6 L138.6 122.6 L138.4 117.4 L137.4 117.4Z" fill="#ee8a22"/>
<path d="M160 104.6 L169.6 104.6 L173 108 L173 123 L160 123Z" fill="#b8bcc4"/><path d="M159 103.6 L168.6 103.6 L172 107 L172 122 L159 122Z" fill="#f6f7f9" stroke="#9aa2ae" stroke-width=".6"/><path d="M168.6 103.6 L168.6 107 L172 107" fill="#dde2e8" stroke="#9aa2ae" stroke-width=".4"/><path d="M167 109H170.6M167 112H170.6M167 115H170.6M167 118H170.6" stroke="#b4bcc8" stroke-width=".6" stroke-dasharray="1 .8"/><path d="M154 110.4 L158 107.4 L165.6 109.4 L166.4 116.6 L161 120 L153.6 116.4Z" fill="#d4e4f4" stroke="#6f98c8" stroke-width=".7"/><path d="M156 108.6 L159.4 105 L165 106.6 L162.6 110.4Z" fill="#fdfdfd" stroke="#8aa8cc" stroke-width=".5"/><path d="M154.6 113.4 L161 116 L166 112.6" fill="none" stroke="#4a8ad0" stroke-width="1.2"/><path d="M157 117 L161.6 119 L165 116.8 L167 119.4 L162 122 L156.6 119.6Z" fill="#fff" stroke="#8aa8cc" stroke-width=".5"/>
<path d="M182 106 L199.6 102.6 L200.6 118 L183.2 122Z" fill="#f6f2dc" stroke="#b8c0c8" stroke-width=".7"/><path d="M183 107 L198.8 103.8 L199.2 109.4 L183.4 112.6Z" fill="#e8f0d8"/><path d="M183.4 112.6 L199.2 109.4 L199.5 114.4 L183.8 117.8Z" fill="#2644a0"/><path d="M183.8 117.8 L199.5 114.4 L199.7 117.2 L184 120.8Z" fill="#ecd9a0"/><path d="M187.6 118.4 L188 110" stroke="#6a4a1a" stroke-width=".8"/><path d="M188 110 Q185 107.6 183.6 109.6 M188 110 Q186 106.4 188.6 105.6 M188 110 Q190.6 106.6 192.6 108.6 M188 110 Q191 109.6 191.6 112" stroke="#2a8a2a" stroke-width="1.2" fill="none"/><path d="M193 123 L202 112.4" stroke="#6a6a6a" stroke-width="1.2"/><path d="M191 125.4 L193.6 121.4 L195.2 122.8Z" fill="#111"/>
<path d="M210 110 L229.4 105.4 L235.4 119 L215.6 125Z" fill="url(#env)" stroke="#8a8a9c" stroke-width=".6"/><path d="M210 110 L223.6 115.4 L229.4 105.4" fill="#f0f0f6" stroke="#9a9aac" stroke-width=".5"/><path d="M215.6 125 L222 116" stroke="#a4a4b4" stroke-width=".4"/><path d="M213.4 105.4 L228.6 101.6 L230.4 107.4 L223.4 113 L214.6 110Z" fill="#fbfbfb" stroke="#c0c0c8" stroke-width=".4"/><path d="M213.6 105.2 L228.6 101.4 L229.6 104.8 L214.6 108.6Z" fill="#d43030"/><text x="216.4" y="108" font-family="Liberation Sans,sans-serif" font-weight="bold" font-size="3.4" fill="#fff" transform="rotate(-14 216.4 108)" textLength="11" lengthAdjust="spacingAndGlyphs">E-MAIL</text><ellipse cx="226" cy="126" rx="10" ry="1" fill="#000" opacity=".12"/>
</svg>
<svg style="left:734px;top:100px" width="28" height="26" viewBox="734 100 28 26"><defs><radialGradient id="ab" cx=".5" cy=".35" r=".7"><stop offset="0" stop-color="#8fc0f8"/><stop offset=".6" stop-color="#2f6fe0"/><stop offset="1" stop-color="#1a3fa8"/></radialGradient></defs><circle cx="747.4" cy="112.8" r="10" fill="#14247a"/><circle cx="747.4" cy="112.8" r="8.4" fill="url(#ab)"/><ellipse cx="747.4" cy="108.6" rx="6" ry="3.2" fill="#fff" opacity=".25"/><path d="M741.6 111.4 L747.4 111.4 L747.4 108 L753.4 112.8 L747.4 117.6 L747.4 114.2 L741.6 114.2Z" fill="#fff"/></svg>
<svg style="left:480px;top:585px" width="320" height="14" viewBox="480 585 320 14">
<rect x="488.2" y="588" width="9" height="8.6" fill="#f6f0d0" stroke="#c8a020" stroke-width=".5"/><circle cx="490.8" cy="590.4" r="1.6" fill="#f0c030" stroke="#8a6a10" stroke-width=".4"/><circle cx="494.6" cy="590" r="1.6" fill="#f0c030" stroke="#8a6a10" stroke-width=".4"/><path d="M489.0 596.4 L489.4 592.6 L492.2 592.6 L492.6 596.4Z" fill="#e8b020" stroke="#8a6a10" stroke-width=".3"/><path d="M493.0 596.4 L493.2 592.2 L496.0 592.2 L496.4 596.4Z" fill="#4a78d0" stroke="#2a4a90" stroke-width=".3"/>
<rect x="780.2" y="588" width="9" height="8.6" fill="#f6f0d0" stroke="#c8a020" stroke-width=".5"/><circle cx="782.8" cy="590.4" r="1.6" fill="#f0c030" stroke="#8a6a10" stroke-width=".4"/><circle cx="786.6" cy="590" r="1.6" fill="#f0c030" stroke="#8a6a10" stroke-width=".4"/><path d="M781.0 596.4 L781.4 592.6 L784.2 592.6 L784.6 596.4Z" fill="#e8b020" stroke="#8a6a10" stroke-width=".3"/><path d="M785.0 596.4 L785.2 592.2 L788.0 592.2 L788.4 596.4Z" fill="#4a78d0" stroke="#2a4a90" stroke-width=".3"/>
<path d="M579 589 L586 587.6 L587.6 594 L580.6 596Z" fill="#eef4fa" stroke="#8aa4c4" stroke-width=".5"/><path d="M580.4 590.6 L585.6 589.6 M580.8 592.2 L586 591.2" stroke="#6a9ad0" stroke-width=".5"/><path d="M578.4 594.6 L584 596.6 L588 594.6" fill="#c4d4e8" stroke="#7a94b4" stroke-width=".4"/>
<rect x="656" y="588.6" width="8.6" height="7.6" fill="#f4f8fc" stroke="#3a4a5a" stroke-width=".6"/><path d="M656.2 590 L660.3 593 L664.4 590" fill="none" stroke="#5a6a7a" stroke-width=".5"/><circle cx="662" cy="588.8" r="2.2" fill="#3a9ab0"/><path d="M657 595.4 H664" stroke="#6aa0d0" stroke-width=".8"/>
<path d="M700.6 588 L706 588 L707.4 591 L702 591Z" fill="#fff" stroke="#8a8a8a" stroke-width=".4"/><path d="M699.4 591.4 L707.6 590.6 L708.6 594.6 L703 596.6 L699 594.6Z" fill="#d8d8dc" stroke="#7a7a7a" stroke-width=".5"/><path d="M701 595 L704 596.4 L707.6 595" stroke="#5a5a5a" stroke-width=".5" fill="none"/>
<rect x="716" y="588" width="9.6" height="2.6" fill="#e4e4e4" stroke="#2a2a2a" stroke-width=".6"/><rect x="717.6" y="592" width="6.4" height="2.2" fill="#e4e4e4" stroke="#2a2a2a" stroke-width=".6"/><path d="M715.4 596 H726.2 M720.8 590.6 V592 M720.8 594.2 V596" stroke="#2a2a2a" stroke-width=".7"/>
</svg>
</div>
<!-- tooltip -->
<div style="left:751px;top:124.5px;width:49px;height:12px;background:#fff;border:1px solid #9c9c9c;border-radius:2px;box-shadow:1px 1px 1px rgba(0,0,0,.25)"></div>
<div style="left:0;top:0;width:800px;height:600px;will-change:transform">
<span class="t" style="left:19.00px;top:3.00px;font-size:7.5px;color:#3f4c5c;letter-spacing:-0.184px;-webkit-text-stroke:.05px currentColor;text-shadow:0 0 2px #fff,0 0 3px #fff;">Programa Pedido de Vendas</span>
<span class="t" style="left:113.00px;top:3.00px;font-size:7.5px;color:#3f4c5c;letter-spacing:0.000px;-webkit-text-stroke:.05px currentColor;text-shadow:0 0 2px #fff,0 0 3px #fff;">+</span>
<span class="t" style="left:120.75px;top:3.00px;font-size:7.5px;color:#3f4c5c;letter-spacing:-0.380px;-webkit-text-stroke:.05px currentColor;text-shadow:0 0 2px #fff,0 0 3px #fff;">Estoque</span>
<span class="t" style="left:149.00px;top:3.00px;font-size:7.5px;color:#3f4c5c;letter-spacing:0.000px;-webkit-text-stroke:.05px currentColor;text-shadow:0 0 2px #fff,0 0 3px #fff;">&amp;</span>
<span class="t" style="left:156.75px;top:3.00px;font-size:7.5px;color:#3f4c5c;letter-spacing:-0.420px;-webkit-text-stroke:.05px currentColor;text-shadow:0 0 2px #fff,0 0 3px #fff;">Financeiro</span>
<span class="t" style="left:191.50px;top:3.00px;font-size:7.5px;color:#3f4c5c;letter-spacing:-0.062px;-webkit-text-stroke:.05px currentColor;text-shadow:0 0 2px #fff,0 0 3px #fff;">v4.0</span>
<span class="t" style="left:208.50px;top:3.00px;font-size:7.5px;color:#3f4c5c;letter-spacing:0.000px;-webkit-text-stroke:.05px currentColor;text-shadow:0 0 2px #fff,0 0 3px #fff;">-</span>
<span class="t" style="left:213.75px;top:3.00px;font-size:7.5px;color:#3f4c5c;letter-spacing:-0.461px;-webkit-text-stroke:.05px currentColor;text-shadow:0 0 2px #fff,0 0 3px #fff;">FpqSystem</span>
<span class="t" style="left:251.50px;top:3.00px;font-size:7.5px;color:#3f4c5c;letter-spacing:0.000px;-webkit-text-stroke:.05px currentColor;text-shadow:0 0 2px #fff,0 0 3px #fff;">e</span>
<span class="t" style="left:257.50px;top:3.00px;font-size:7.5px;color:#3f4c5c;letter-spacing:0.146px;-webkit-text-stroke:.05px currentColor;text-shadow:0 0 2px #fff,0 0 3px #fff;">Virtual</span>
<span class="t" style="left:283.00px;top:3.00px;font-size:7.5px;color:#3f4c5c;letter-spacing:-0.523px;-webkit-text-stroke:.05px currentColor;text-shadow:0 0 2px #fff,0 0 3px #fff;">Programas</span>
<span class="t" style="left:319.25px;top:3.00px;font-size:7.5px;color:#3f4c5c;letter-spacing:0.000px;-webkit-text-stroke:.05px currentColor;text-shadow:0 0 2px #fff,0 0 3px #fff;">®</span>
<span class="t" style="left:327.00px;top:3.00px;font-size:7.5px;color:#3f4c5c;letter-spacing:0.000px;-webkit-text-stroke:.05px currentColor;text-shadow:0 0 2px #fff,0 0 3px #fff;">|</span>
<span class="t" style="left:331.25px;top:3.00px;font-size:7.5px;color:#3f4c5c;letter-spacing:-0.234px;-webkit-text-stroke:.05px currentColor;text-shadow:0 0 2px #fff,0 0 3px #fff;">Licenciado</span>
<span class="t" style="left:368.00px;top:3.00px;font-size:7.5px;color:#3f4c5c;letter-spacing:-0.839px;-webkit-text-stroke:.05px currentColor;text-shadow:0 0 2px #fff,0 0 3px #fff;">para</span>
<span class="t" style="left:385.50px;top:3.00px;font-size:7.5px;color:#3f4c5c;letter-spacing:-0.645px;-webkit-text-stroke:.05px currentColor;text-shadow:0 0 2px #fff,0 0 3px #fff;">DEMONSTRAÇÃO VENDAS</span>
<span class="t" style="left:475.60px;top:3.00px;font-size:7.5px;color:#3f4c5c;letter-spacing:-0.729px;-webkit-text-stroke:.05px currentColor;text-shadow:0 0 2px #fff,0 0 3px #fff;">v4.0</span>
<span class="t" style="left:491.00px;top:3.00px;font-size:7.5px;color:#3f4c5c;letter-spacing:-0.606px;-webkit-text-stroke:.05px currentColor;text-shadow:0 0 2px #fff,0 0 3px #fff;">301216</span>
<span class="t" style="left:516.00px;top:3.00px;font-size:7.5px;color:#3f4c5c;letter-spacing:-0.606px;-webkit-text-stroke:.05px currentColor;text-shadow:0 0 2px #fff,0 0 3px #fff;">010716</span>
<span class="t" style="left:541.00px;top:3.00px;font-size:7.5px;color:#3f4c5c;letter-spacing:-0.320px;-webkit-text-stroke:.05px currentColor;text-shadow:0 0 2px #fff,0 0 3px #fff;">&gt;&gt;&gt;</span>
<span class="t" style="left:5.00px;top:16.00px;font-size:7.8px;color:#ababab;letter-spacing:-0.816px;-webkit-text-stroke:0;">CADASTROS</span>
<span class="t" style="left:55.50px;top:16.00px;font-size:7.8px;color:#ababab;letter-spacing:-0.780px;-webkit-text-stroke:0;">PRODUTOS/ESTOQUE</span>
<span class="t" style="left:137.00px;top:16.00px;font-size:7.8px;color:#ababab;letter-spacing:-0.742px;-webkit-text-stroke:0;">PEDIDO DE VENDAS</span>
<span class="t" style="left:212.00px;top:16.00px;font-size:7.8px;color:#ababab;letter-spacing:-0.749px;-webkit-text-stroke:0;">PEDIDO COMPRAS</span>
<span class="t" style="left:283.25px;top:16.00px;font-size:7.8px;color:#ababab;letter-spacing:-0.788px;-webkit-text-stroke:0;">FINANCEIRO</span>
<span class="t" style="left:333.75px;top:16.00px;font-size:7.8px;color:#ababab;letter-spacing:-0.799px;-webkit-text-stroke:0;">RELATÓRIOS</span>
<span class="t" style="left:385.00px;top:16.00px;font-size:7.8px;color:#ababab;letter-spacing:-0.661px;-webkit-text-stroke:0;">ESTATISTICA</span>
<span class="t" style="left:437.00px;top:16.00px;font-size:7.8px;color:#ababab;letter-spacing:-0.595px;-webkit-text-stroke:0;">AGENDAMENTO</span>
<span class="t" style="left:501.25px;top:16.00px;font-size:7.8px;color:#ababab;letter-spacing:-0.759px;-webkit-text-stroke:0;">FERRAMENTAS</span>
<span class="t" style="left:560.50px;top:16.00px;font-size:7.8px;color:#ababab;letter-spacing:-0.891px;-webkit-text-stroke:0;">AJUDA</span>
<span class="t" style="left:602.50px;top:16.00px;font-size:7.8px;color:#1a1a1a;letter-spacing:-0.450px;">E-MAIL</span>
<span class="t" style="left:13.00px;top:57.00px;font-size:6.3px;color:#111;letter-spacing:-0.071px;font-weight:bold;font-family:"DejaVu Sans","Liberation Sans",sans-serif;-webkit-text-stroke:0.55px currentColor;">Clientes</span>
<span class="t" style="left:47.50px;top:57.00px;font-size:6.3px;color:#111;letter-spacing:-0.083px;font-weight:bold;font-family:"DejaVu Sans","Liberation Sans",sans-serif;-webkit-text-stroke:0.55px currentColor;">Fornece</span>
<span class="t" style="left:81.00px;top:57.00px;font-size:6.3px;color:#111;letter-spacing:0.042px;font-weight:bold;font-family:"DejaVu Sans","Liberation Sans",sans-serif;-webkit-text-stroke:0.55px currentColor;">Vendedor</span>
<span class="t" style="left:122.50px;top:57.00px;font-size:6.3px;color:#7a2a3a;letter-spacing:-0.163px;font-weight:bold;font-family:"DejaVu Sans","Liberation Sans",sans-serif;-webkit-text-stroke:0.4px currentColor;">Produtos</span>
<span class="t" style="left:157.00px;top:57.00px;font-size:6.3px;color:#111;letter-spacing:0.014px;font-weight:bold;font-family:"DejaVu Sans","Liberation Sans",sans-serif;-webkit-text-stroke:0.55px currentColor;">Consultar</span>
<span class="t" style="left:202.00px;top:57.00px;font-size:6.3px;color:#2a2f6a;letter-spacing:0.037px;font-weight:bold;font-family:"DejaVu Sans","Liberation Sans",sans-serif;-webkit-text-stroke:0.4px currentColor;">Vendas</span>
<span class="t" style="left:235.00px;top:57.00px;font-size:6.3px;color:#2a3266;letter-spacing:-0.129px;font-weight:bold;font-family:"DejaVu Sans","Liberation Sans",sans-serif;-webkit-text-stroke:0.4px currentColor;">Pesquisa</span>
<span class="t" style="left:305.75px;top:57.00px;font-size:6.3px;color:#2a3266;letter-spacing:0.150px;font-weight:bold;font-family:"DejaVu Sans","Liberation Sans",sans-serif;-webkit-text-stroke:0.4px currentColor;">Relatório</span>
<span class="t" style="left:347.00px;top:57.00px;font-size:6.3px;color:#14303a;letter-spacing:-0.150px;font-weight:bold;font-family:"DejaVu Sans","Liberation Sans",sans-serif;-webkit-text-stroke:0.4px currentColor;">Finanças</span>
<span class="t" style="left:385.00px;top:57.00px;font-size:6.3px;color:#1c2430;letter-spacing:0.414px;font-weight:bold;font-family:"DejaVu Sans","Liberation Sans",sans-serif;-webkit-text-stroke:0.4px currentColor;">CAIXA</span>
<span class="t" style="left:419.50px;top:57.00px;font-size:6.3px;color:#1f6a28;letter-spacing:-0.018px;font-weight:bold;font-family:"DejaVu Sans","Liberation Sans",sans-serif;-webkit-text-stroke:0.4px currentColor;">Receber</span>
<span class="t" style="left:453.75px;top:57.00px;font-size:6.3px;color:#7c0f1e;letter-spacing:0.154px;font-weight:bold;font-family:"DejaVu Sans","Liberation Sans",sans-serif;-webkit-text-stroke:0.4px currentColor;">A Pagar</span>
<span class="t" style="left:537.00px;top:57.00px;font-size:6.3px;color:#222;letter-spacing:-0.019px;font-weight:bold;font-family:"DejaVu Sans","Liberation Sans",sans-serif;-webkit-text-stroke:0.4px currentColor;">Agenda</span>
<span class="t" style="left:577.00px;top:57.00px;font-size:6.2px;color:#000;letter-spacing:0.435px;font-weight:bold;font-family:"DejaVu Sans","Liberation Sans",sans-serif;-webkit-text-stroke:0.55px currentColor;">Suporte</span>
<span class="t" style="left:270.75px;top:57.00px;font-size:6.2px;color:#000;letter-spacing:-0.141px;font-weight:bold;font-family:"DejaVu Sans","Liberation Sans",sans-serif;-webkit-text-stroke:0.55px currentColor;">Consulta</span>
<span class="t" style="left:496.25px;top:56.00px;font-size:7.0px;color:#1c1c1c;letter-spacing:-0.225px;-webkit-text-stroke:.25px currentColor;">Cartas</span>
<span class="t" style="left:27.00px;top:85.00px;font-size:7.6px;color:#18223c;letter-spacing:-0.242px;-webkit-text-stroke:.3px currentColor;">Pesquisa Cadastro de Clientes</span>
<span class="t" style="left:241.50px;top:102.00px;font-size:6.7px;color:#000;letter-spacing:0.017px;">Tipo do Filtro</span>
<span class="t" style="left:245.00px;top:115.00px;font-size:6.7px;color:#000;letter-spacing:-0.086px;">Ordem Alfabetica Cliente</span>
<span class="t" style="left:370.60px;top:101.00px;font-size:6.7px;color:#000;letter-spacing:-0.063px;">Pesquisar por Nome</span>
<span class="t" style="left:569.00px;top:101.00px;font-size:6.7px;color:#000;letter-spacing:-0.029px;">Rastrear Nome</span>
<span class="t" style="left:658.50px;top:101.00px;font-size:6.7px;color:#000;letter-spacing:-0.011px;">Rastrear Telefone</span>
<span class="t" style="left:754.60px;top:127.00px;font-size:7.4px;color:#5a5a5a;letter-spacing:-0.159px;">Fechar / Sair</span>
<span class="t" style="left:335.00px;top:524.00px;font-size:6.7px;color:#000;letter-spacing:-0.008px;">Para fechar a tela ESC ou botão SAIR</span>
<span class="t" style="left:51.00px;top:134.00px;font-size:6.7px;color:#000;letter-spacing:-0.281px;">Nº</span>
<span class="t" style="left:74.00px;top:134.00px;font-size:6.7px;color:#000;letter-spacing:0.037px;">Nome / Razão Social</span>
<span class="t" style="left:273.50px;top:134.00px;font-size:6.7px;color:#000;letter-spacing:-0.038px;">Nome Fantasia</span>
<span class="t" style="left:380.50px;top:134.00px;font-size:6.7px;color:#000;letter-spacing:-0.080px;">Tipo Cadastro</span>
<span class="t" style="left:473.60px;top:134.00px;font-size:6.7px;color:#000;letter-spacing:0.173px;">Tel(1)</span>
<span class="t" style="left:524.50px;top:134.00px;font-size:6.7px;color:#000;letter-spacing:0.113px;">Tel(2)</span>
<span class="t" style="left:574.90px;top:134.00px;font-size:6.7px;color:#000;letter-spacing:-0.165px;">Celular</span>
<span class="t" style="left:625.50px;top:134.00px;font-size:6.7px;color:#000;letter-spacing:0.039px;">Whatsapp</span>
<span class="t" style="left:675.80px;top:134.00px;font-size:6.7px;color:#000;letter-spacing:-0.199px;">Email -&gt;-&gt;-&gt;</span>
<span class="t" style="left:49.80px;top:143.00px;font-size:6.7px;color:#000;letter-spacing:-0.027px;">00001</span>
<span class="t" style="left:73.30px;top:143.00px;font-size:6.7px;color:#000;letter-spacing:-0.040px;">CLIENTE GERAL</span>
<span class="t" style="left:49.80px;top:152.00px;font-size:6.7px;color:#000;letter-spacing:-0.027px;">00002</span>
<span class="t" style="left:73.30px;top:152.00px;font-size:6.7px;color:#000;letter-spacing:-0.043px;">FLÁVIO QUADRADO</span>
<span class="t" style="left:49.80px;top:161.00px;font-size:6.7px;color:#2c2c00;letter-spacing:-0.027px;">00003</span>
<span class="t" style="left:73.30px;top:161.00px;font-size:6.7px;color:#2c2c00;letter-spacing:0.018px;">FULANO DE TAL</span>
<span class="t" style="left:49.80px;top:169.00px;font-size:6.7px;color:#000;letter-spacing:-0.027px;">00006</span>
<span class="t" style="left:73.30px;top:169.00px;font-size:6.7px;color:#000;letter-spacing:-0.069px;">GETULIO VARGAS</span>
<span class="t" style="left:49.80px;top:178.00px;font-size:6.7px;color:#8fdce4;letter-spacing:-0.027px;">00008</span>
<span class="t" style="left:73.30px;top:178.00px;font-size:6.7px;color:#8fdce4;letter-spacing:-0.009px;">MERYL STREEP</span>
<span class="t" style="left:49.80px;top:187.00px;font-size:6.7px;color:#6a1010;letter-spacing:-0.027px;">00005</span>
<span class="t" style="left:73.30px;top:187.00px;font-size:6.7px;color:#6a1010;letter-spacing:-0.060px;">RAIMUNDO CARDOSO</span>
<span class="t" style="left:49.80px;top:196.00px;font-size:6.7px;color:#000;letter-spacing:-0.027px;">00007</span>
<span class="t" style="left:73.30px;top:196.00px;font-size:6.7px;color:#000;letter-spacing:0.037px;">RICARDO ALMEIDA</span>
<span class="t" style="left:49.80px;top:204.00px;font-size:6.7px;color:#000;letter-spacing:-0.027px;">00004</span>
<span class="t" style="left:73.30px;top:204.00px;font-size:6.7px;color:#000;letter-spacing:-0.097px;">ULISSES GUIMARAES</span>
<span class="t" style="left:378.80px;top:152.00px;font-size:6.7px;color:#000;letter-spacing:-0.108px;">SERVIÇOS</span>
<span class="t" style="left:378.80px;top:187.00px;font-size:6.7px;color:#6a1010;letter-spacing:-0.108px;">SERVIÇOS</span>
<span class="t" style="left:378.80px;top:204.00px;font-size:6.7px;color:#000;letter-spacing:-0.197px;">COSMÉTICOS</span>
<span class="t" style="left:472.60px;top:152.00px;font-size:6.7px;color:#000;letter-spacing:-0.023px;">(99)99999-9999</span>
<span class="t" style="left:523.50px;top:152.00px;font-size:6.7px;color:#000;letter-spacing:-0.046px;">(99)99999-9999</span>
<span class="t" style="left:574.00px;top:152.00px;font-size:6.7px;color:#000;letter-spacing:-0.049px;">(99) 9999-9999</span>
<span class="t" style="left:624.80px;top:152.00px;font-size:6.7px;color:#000;letter-spacing:-0.041px;">(99) 9999-9999</span>
<span class="t" style="left:675.80px;top:204.00px;font-size:6.7px;color:#000;letter-spacing:-0.084px;">seuemail@servidor.com.b</span>
<span class="t" style="left:5.00px;top:590.00px;font-size:6.7px;color:#000;letter-spacing:-0.015px;">SUA CIDADE - RS &nbsp;1 de Agosto de 2016 - Segunda-feira</span>
<span class="t" style="left:341.00px;top:590.00px;font-size:6.7px;color:#000;letter-spacing:-0.562px;">Num</span>
<span class="t" style="left:364.50px;top:590.00px;font-size:6.7px;color:#b8b8b8;letter-spacing:-0.375px;">Caps</span>
<span class="t" style="left:389.00px;top:590.00px;font-size:6.7px;color:#b8b8b8;letter-spacing:-0.211px;">Ins</span>
<span class="t" style="left:408.00px;top:590.00px;font-size:6.7px;color:#000;letter-spacing:0.307px;">01/08/2016</span>
<span class="t" style="left:454.25px;top:590.00px;font-size:6.7px;color:#000;letter-spacing:-0.042px;">01:28:16</span>
<span class="t" style="left:522.00px;top:590.00px;font-size:6.9px;color:#2f8f2f;letter-spacing:-0.244px;">MASTER</span>
<span class="t" style="left:590.50px;top:590.00px;font-size:6.7px;color:#000;letter-spacing:0.021px;">Versão Vendas 4.0</span>
<span class="t" style="left:671.00px;top:590.00px;font-size:6.7px;color:#000;letter-spacing:-0.184px;">Email</span>
<span class="t" style="left:736.60px;top:590.00px;font-size:6.7px;color:#a8303c;letter-spacing:-0.054px;">FpqSystem</span>
</div>
</body>
</html>
